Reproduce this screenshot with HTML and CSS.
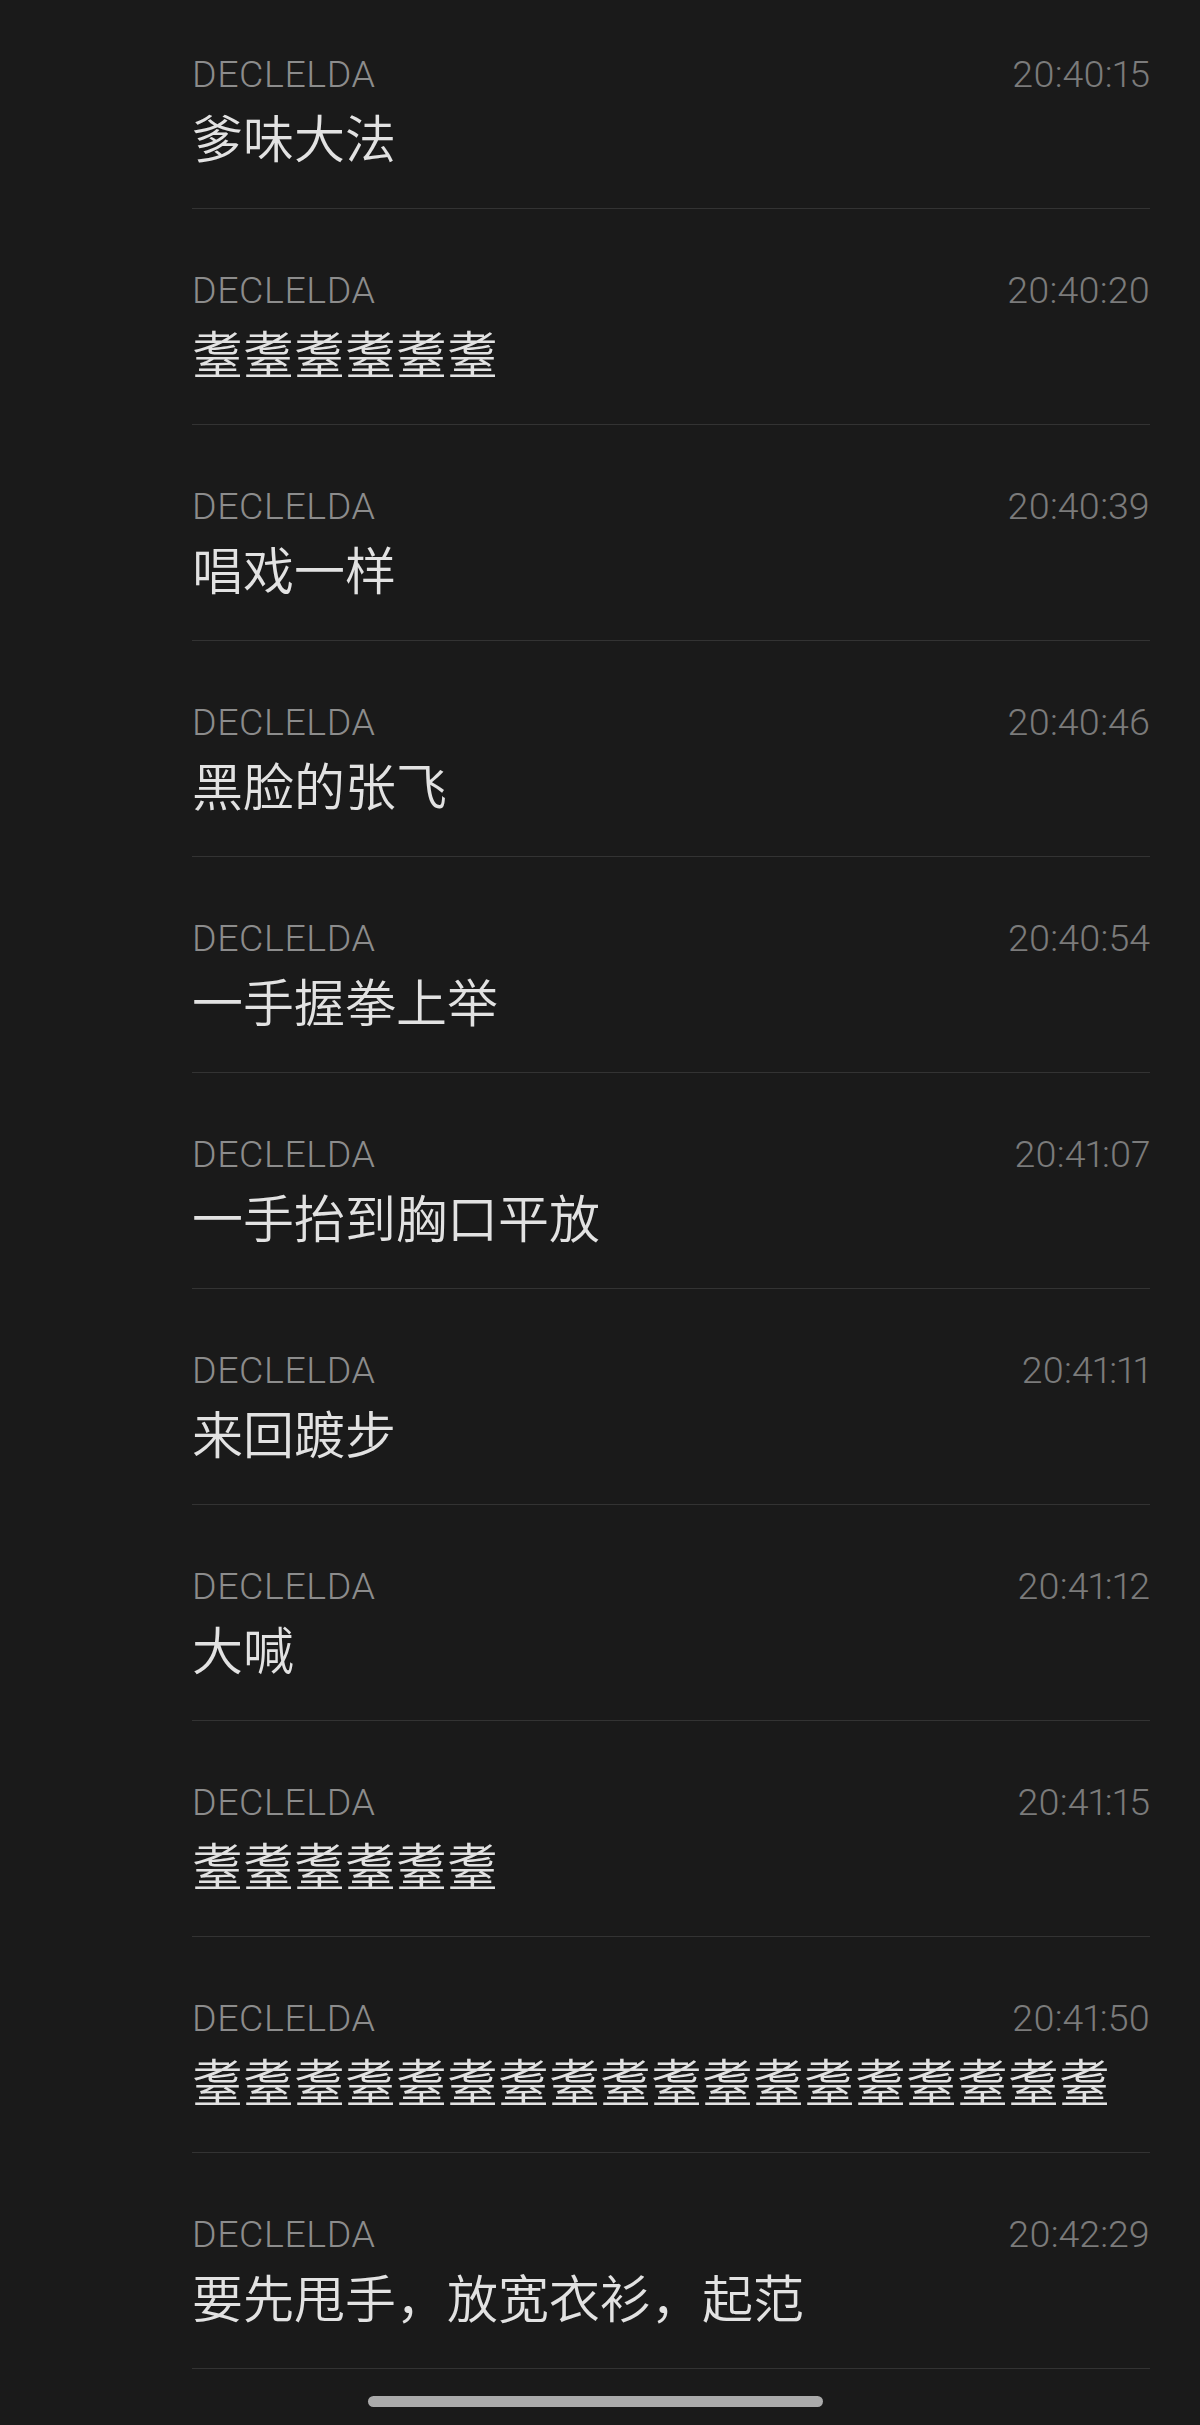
FILE: index.html
```html
<!DOCTYPE html>
<html lang="zh">
<head>
<meta charset="utf-8">
<link rel="stylesheet" href="styles.css">
</head>
<body>
<div class="list">
  <div class="msg"><div class="head"><span class="name">DECLELDA</span><span class="time">20:40:15</span></div><div class="text">爹味大法</div></div>
  <div class="msg"><div class="head"><span class="name">DECLELDA</span><span class="time">20:40:20</span></div><div class="text">耋耋耋耋耋耋</div></div>
  <div class="msg"><div class="head"><span class="name">DECLELDA</span><span class="time">20:40:39</span></div><div class="text">唱戏一样</div></div>
  <div class="msg"><div class="head"><span class="name">DECLELDA</span><span class="time">20:40:46</span></div><div class="text">黑脸的张飞</div></div>
  <div class="msg"><div class="head"><span class="name">DECLELDA</span><span class="time">20:40:54</span></div><div class="text">一手握拳上举</div></div>
  <div class="msg"><div class="head"><span class="name">DECLELDA</span><span class="time">20:41:07</span></div><div class="text">一手抬到胸口平放</div></div>
  <div class="msg"><div class="head"><span class="name">DECLELDA</span><span class="time">20:41:11</span></div><div class="text">来回踱步</div></div>
  <div class="msg"><div class="head"><span class="name">DECLELDA</span><span class="time">20:41:12</span></div><div class="text">大喊</div></div>
  <div class="msg"><div class="head"><span class="name">DECLELDA</span><span class="time">20:41:15</span></div><div class="text">耋耋耋耋耋耋</div></div>
  <div class="msg"><div class="head"><span class="name">DECLELDA</span><span class="time">20:41:50</span></div><div class="text">耋耋耋耋耋耋耋耋耋耋耋耋耋耋耋耋耋耋</div></div>
  <div class="msg"><div class="head"><span class="name">DECLELDA</span><span class="time">20:42:29</span></div><div class="text">要先甩手，放宽衣衫，起范</div></div>
</div>
<div class="home-indicator"></div>
</body>
</html>
```
FILE: styles.css
```css
html, body {
  margin: 0;
  padding: 0;
  background: #1a1a1a;
}
body {
  position: relative;
  width: 1200px;
  height: 2425px;
  overflow: hidden;
  font-family: Roboto, "Noto Sans CJK SC", sans-serif;
}
.list {
  display: flex;
  flex-direction: column;
  margin-top: -7px;
  padding: 0 50px 0 192px;
}
.msg {
  box-sizing: border-box;
  height: 216px;
  padding-top: 59px;
  border-bottom: 1px solid #333333;
}
.head {
  display: flex;
  justify-content: space-between;
  align-items: baseline;
  font-size: 37.5px;
  font-weight: 300;
  line-height: 44px;
  color: #8c8c8c;
}
.name {
  letter-spacing: 0.6px;
}
.time {
  color: #7b7b7b;
  font-variant-numeric: proportional-nums;
}
.text {
  margin-top: 8px;
  font-family: "Noto Sans CJK SC", sans-serif;
  font-size: 51px;
  font-weight: 350;
  line-height: 64px;
  color: #e2e2e2;
  white-space: nowrap;
}
.home-indicator {
  position: absolute;
  left: 368px;
  top: 2396px;
  width: 455px;
  height: 11px;
  border-radius: 6px;
  background: #ababab;
}
```
